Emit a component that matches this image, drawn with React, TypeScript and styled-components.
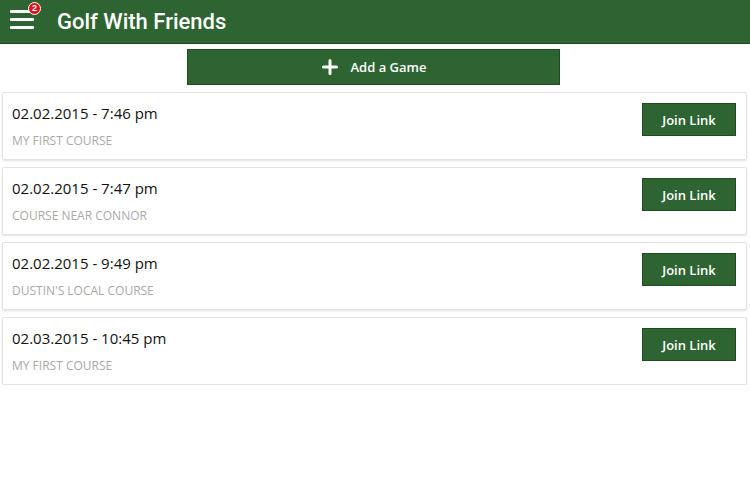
import React from "react";
import styled, { createGlobalStyle } from "styled-components";

const Global = createGlobalStyle`
  html, body { margin: 0; padding: 0; background: #fff; }
  body { font-family: "Open Sans", "Liberation Sans", sans-serif; }
  * { box-sizing: border-box; }
`;

const Header = styled.header`
  height: 44px;
  background: #2e6431;
  border-bottom: 1px solid #1f4a22;
  display: flex;
  align-items: center;
  padding-left: 10px;
  gap: 23px;
`;

const MenuButton = styled.div`
  position: relative;
  width: 24px;
  height: 19px;
  display: flex;
  flex-direction: column;
  justify-content: space-between;
  margin-bottom: 5px;
`;

const Bar = styled.span`
  display: block;
  height: 3px;
  background: #fff;
  border-radius: 1px;
`;

const Badge = styled.span`
  position: absolute;
  top: -8px;
  right: -7px;
  width: 13px;
  height: 13px;
  border-radius: 50%;
  background: #e0141e;
  border: 1px solid #fff;
  color: #fff;
  font: 700 9px "Liberation Sans", Arial, sans-serif;
  display: flex;
  align-items: center;
  justify-content: center;
`;

const Title = styled.h1`
  margin: 0;
  color: #fff;
  font: 500 22px Roboto, "Liberation Sans", sans-serif;
`;

const Main = styled.main`
  padding: 5px 3px 0 2px;
  display: flex;
  flex-direction: column;
  gap: 7px;
`;

const AddButton = styled.button`
  align-self: center;
  width: 373px;
  height: 36px;
  background: #2e6431;
  border: 1px solid #1f4a22;
  color: #fff;
  font: 600 13px "Open Sans", "Liberation Sans", sans-serif;
  display: flex;
  align-items: center;
  justify-content: center;
  gap: 13px;
  padding: 0 0 0 2px;
  margin-right: 3px;
`;

const Card = styled.div`
  height: 68px;
  border: 1px solid #e3e3e3;
  border-radius: 2px;
  box-shadow: 0 1px 2px rgba(0, 0, 0, 0.12);
  display: flex;
  align-items: flex-start;
  justify-content: space-between;
  padding: 9px 10px 0 9px;
`;

const Info = styled.div`
  display: flex;
  flex-direction: column;
  gap: 9px;
`;

const DateText = styled.div`
  font: 400 15px "Open Sans", "Liberation Sans", sans-serif;
  color: #111;
  line-height: 22px;
`;

const Course = styled.div`
  font: 400 12px "Open Sans", "Liberation Sans", sans-serif;
  color: #a9a9a9;
  text-transform: uppercase;
  line-height: 16px;
`;

const JoinButton = styled.button`
  margin-top: 1px;
  width: 94px;
  height: 33px;
  background: #2e6431;
  border: 1px solid #1f4a22;
  color: #fff;
  font: 600 13px "Open Sans", "Liberation Sans", sans-serif;
  padding: 0;
`;

const games = [
  { date: "02.02.2015 - 7:46 pm", course: "My First Course" },
  { date: "02.02.2015 - 7:47 pm", course: "Course Near Connor" },
  { date: "02.02.2015 - 9:49 pm", course: "Dustin's Local Course" },
  { date: "02.03.2015 - 10:45 pm", course: "My First Course" },
];

export default function App() {
  return (
    <>
      <Global />
      <Header>
        <MenuButton>
          <Bar />
          <Bar />
          <Bar />
          <Badge>2</Badge>
        </MenuButton>
        <Title>Golf With Friends</Title>
      </Header>
      <Main>
        <AddButton>
          <svg width="16" height="16" viewBox="0 0 16 16">
            <path d="M6.5 1.5a1.5 1.5 0 0 1 3 0V6.5h5a1.5 1.5 0 0 1 0 3h-5v5a1.5 1.5 0 0 1-3 0v-5h-5a1.5 1.5 0 0 1 0-3h5z" fill="#fff" />
          </svg>
          Add a Game
        </AddButton>
        {games.map((g, i) => (
          <Card key={i}>
            <Info>
              <DateText>{g.date}</DateText>
              <Course>{g.course}</Course>
            </Info>
            <JoinButton>Join Link</JoinButton>
          </Card>
        ))}
      </Main>
    </>
  );
}
